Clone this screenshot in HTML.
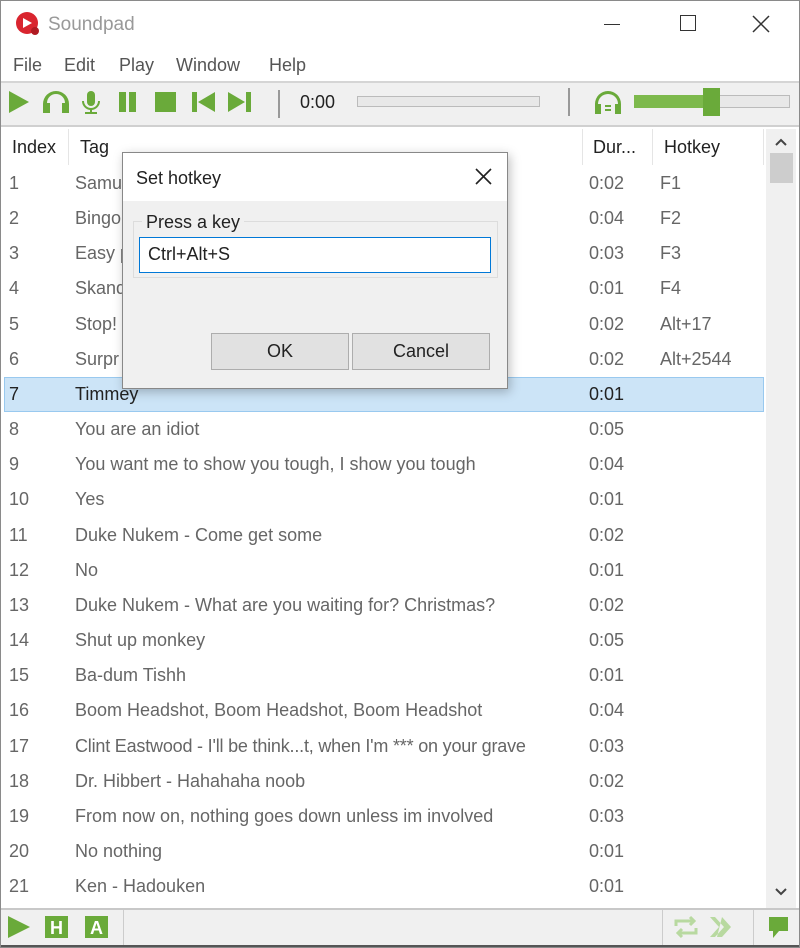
<!DOCTYPE html>
<html><head><style>
*{margin:0;padding:0;box-sizing:border-box}
body{width:800px;height:948px;background:#fff;font-family:"Liberation Sans",sans-serif;position:relative;overflow:hidden;color:#333}
.a{position:absolute}
.t{font-size:18px;white-space:nowrap}
.row{position:absolute;left:4px;width:760px;height:35px;font-size:18px;color:#666}
.row span{position:absolute;top:7px;white-space:nowrap}
.btn{position:absolute;background:#e1e1e1;border:1px solid #adadad;font-size:18px;text-align:center;line-height:35px;color:#222}
</style></head><body>
<div class="a" style="left:0;top:0;width:800px;height:948px;border:1px solid #8a8a8a"></div>
<!-- title -->
<svg class="a" style="left:14px;top:10px" width="28" height="28" viewBox="0 0 28 28"><circle cx="13" cy="13" r="11" fill="#d9252f"/><path d="M9 8l9 5-9 5z" fill="#fff"/><circle cx="21" cy="21" r="4" fill="#b01a22"/></svg>
<div class="a t" style="left:48px;top:14px;color:#999;font-size:19px">Soundpad</div>
<div class="a" style="left:604px;top:24px;width:16px;height:1px;background:#333"></div>
<div class="a" style="left:680px;top:15px;width:16px;height:16px;border:1px solid #333"></div>
<svg class="a" style="left:752px;top:15px" width="18" height="18"><path d="M1 1L17 17M17 1L1 17" stroke="#333" stroke-width="1.5"/></svg>
<!-- menu -->
<div class="a t" style="left:13px;top:55px;color:#555">File</div>
<div class="a t" style="left:64px;top:55px;color:#555">Edit</div>
<div class="a t" style="left:119px;top:55px;color:#555">Play</div>
<div class="a t" style="left:176px;top:55px;color:#555">Window</div>
<div class="a t" style="left:269px;top:55px;color:#555">Help</div>
<!-- toolbar -->
<div class="a" style="left:1px;top:81px;width:798px;height:46px;background:#f0f0f0;border-top:2px solid #d5d5d5;border-bottom:2px solid #d0d0d0"></div>
<svg class="a" style="left:6px;top:88px" width="260" height="30" viewBox="0 0 260 30" fill="#6aaa3a">
<path d="M3 3l20 11-20 11z"/>
<path d="M37 25v-9a13 13 0 0 1 26 0v9h-7v-10h3a9 9 0 0 0-18 0h3v10z"/>
<rect x="81" y="3" width="8" height="15" rx="4"/><path d="M77 13a8 8 0 0 0 16 0" stroke="#6aaa3a" stroke-width="2" fill="none"/><rect x="84" y="20" width="2" height="4"/><rect x="79" y="24" width="12" height="2"/>
<rect x="113" y="4" width="7" height="20"/><rect x="123" y="4" width="7" height="20"/>
<rect x="149" y="4" width="21" height="20"/>
<rect x="186" y="4" width="5" height="20"/><path d="M209 4v20l-17-10z"/>
<path d="M222 4v20l17-10z"/><rect x="240" y="4" width="5" height="20"/>
</svg>
<div class="a" style="left:278px;top:90px;width:2px;height:28px;background:#999"></div>
<div class="a t" style="left:300px;top:92px;color:#222">0:00</div>
<div class="a" style="left:357px;top:96px;width:183px;height:11px;border:1px solid #bbb;background:#e8e8e8"></div>
<div class="a" style="left:568px;top:88px;width:2px;height:28px;background:#999"></div>
<svg class="a" style="left:592px;top:88px" width="32" height="28" viewBox="0 0 32 28" fill="#6aaa3a"><path d="M3 26v-10a13 13 0 0 1 26 0v10h-6v-10h3a10 10 0 0 0-20 0h3v10z"/><rect x="13" y="17" width="6" height="2"/><rect x="13" y="21" width="6" height="2"/></svg>
<div class="a" style="left:634px;top:95px;width:156px;height:13px;border:1px solid #bbb;background:#e8e8e8"></div>
<div class="a" style="left:634px;top:95px;width:80px;height:13px;background:#7db94c"></div>
<div class="a" style="left:703px;top:88px;width:17px;height:28px;background:#6aaa3a"></div>
<!-- header -->
<div class="a t" style="left:12px;top:137px;color:#222">Index</div>
<div class="a" style="left:68px;top:129px;width:1px;height:36px;background:#e5e5e5"></div>
<div class="a t" style="left:80px;top:137px;color:#222">Tag</div>
<div class="a" style="left:582px;top:129px;width:1px;height:36px;background:#e5e5e5"></div>
<div class="a t" style="left:593px;top:137px;color:#222">Dur...</div>
<div class="a" style="left:652px;top:129px;width:1px;height:36px;background:#e5e5e5"></div>
<div class="a t" style="left:664px;top:137px;color:#222">Hotkey</div>
<div class="a" style="left:763px;top:129px;width:1px;height:36px;background:#e5e5e5"></div>
<!-- scrollbar -->
<div class="a" style="left:766px;top:129px;width:30px;height:780px;background:#f0f0f0"></div>
<svg class="a" style="left:775px;top:138px" width="12" height="8"><path d="M1 7l5-5 5 5" stroke="#444" stroke-width="2" fill="none"/></svg>
<div class="a" style="left:770px;top:153px;width:23px;height:30px;background:#cdcdcd"></div>
<svg class="a" style="left:775px;top:888px" width="12" height="8"><path d="M1 1l5 5 5-5" stroke="#444" stroke-width="2" fill="none"/></svg>
<!-- rows -->
<div class="a" style="left:4px;top:377px;width:760px;height:35px;background:#cce4f7;border:1px solid #99c9ef"></div>
<div class="row" style="top:166px"><span style="left:5px">1</span><span style="left:71px">Samuel</span><span style="left:585px">0:02</span><span style="left:656px">F1</span></div>
<div class="row" style="top:201px"><span style="left:5px">2</span><span style="left:71px">Bingo</span><span style="left:585px">0:04</span><span style="left:656px">F2</span></div>
<div class="row" style="top:236px"><span style="left:5px">3</span><span style="left:71px">Easy p</span><span style="left:585px">0:03</span><span style="left:656px">F3</span></div>
<div class="row" style="top:271px"><span style="left:5px">4</span><span style="left:71px">Skand</span><span style="left:585px">0:01</span><span style="left:656px">F4</span></div>
<div class="row" style="top:307px"><span style="left:5px">5</span><span style="left:71px">Stop!</span><span style="left:585px">0:02</span><span style="left:656px">Alt+17</span></div>
<div class="row" style="top:342px"><span style="left:5px">6</span><span style="left:71px">Surpr</span><span style="left:585px">0:02</span><span style="left:656px">Alt+2544</span></div>
<div class="row" style="top:377px;color:#222"><span style="left:5px">7</span><span style="left:71px">Timmey</span><span style="left:585px">0:01</span></div>
<div class="row" style="top:412px"><span style="left:5px">8</span><span style="left:71px">You are an idiot</span><span style="left:585px">0:05</span></div>
<div class="row" style="top:447px"><span style="left:5px">9</span><span style="left:71px">You want me to show you tough, I show you tough</span><span style="left:585px">0:04</span></div>
<div class="row" style="top:482px"><span style="left:5px">10</span><span style="left:71px">Yes</span><span style="left:585px">0:01</span></div>
<div class="row" style="top:518px"><span style="left:5px">11</span><span style="left:71px">Duke Nukem - Come get some</span><span style="left:585px">0:02</span></div>
<div class="row" style="top:553px"><span style="left:5px">12</span><span style="left:71px">No</span><span style="left:585px">0:01</span></div>
<div class="row" style="top:588px"><span style="left:5px">13</span><span style="left:71px">Duke Nukem - What are you waiting for? Christmas?</span><span style="left:585px">0:02</span></div>
<div class="row" style="top:623px"><span style="left:5px">14</span><span style="left:71px">Shut up monkey</span><span style="left:585px">0:05</span></div>
<div class="row" style="top:658px"><span style="left:5px">15</span><span style="left:71px">Ba-dum Tishh</span><span style="left:585px">0:01</span></div>
<div class="row" style="top:693px"><span style="left:5px">16</span><span style="left:71px">Boom Headshot, Boom Headshot, Boom Headshot</span><span style="left:585px">0:04</span></div>
<div class="row" style="top:729px"><span style="left:5px">17</span><span style="left:71px;letter-spacing:-0.2px">Clint Eastwood - I'll be think...t, when I'm *** on your grave</span><span style="left:585px">0:03</span></div>
<div class="row" style="top:764px"><span style="left:5px">18</span><span style="left:71px">Dr. Hibbert - Hahahaha noob</span><span style="left:585px">0:02</span></div>
<div class="row" style="top:799px"><span style="left:5px">19</span><span style="left:71px">From now on, nothing goes down unless im involved</span><span style="left:585px">0:03</span></div>
<div class="row" style="top:834px"><span style="left:5px">20</span><span style="left:71px">No nothing</span><span style="left:585px">0:01</span></div>
<div class="row" style="top:869px"><span style="left:5px">21</span><span style="left:71px">Ken - Hadouken</span><span style="left:585px">0:01</span></div>
<!-- bottom bar -->
<div class="a" style="left:1px;top:908px;width:798px;height:39px;background:#f0f0f0;border-top:2px solid #c8c8c8;border-bottom:2px solid #555"></div>
<div class="a" style="left:123px;top:910px;width:1px;height:35px;background:#ccc"></div>
<div class="a" style="left:662px;top:910px;width:1px;height:35px;background:#ccc"></div>
<div class="a" style="left:753px;top:910px;width:1px;height:35px;background:#ccc"></div>
<svg class="a" style="left:6px;top:914px" width="110" height="26" viewBox="0 0 110 26"><path d="M2 2l22 11-22 11z" fill="#6aaa3a"/><rect x="39" y="2" width="23" height="22" fill="#6aaa3a"/><text x="50.5" y="20" font-size="18" font-weight="bold" fill="#fff" text-anchor="middle" font-family="Liberation Sans">H</text><rect x="79" y="2" width="23" height="22" fill="#6aaa3a"/><text x="90.5" y="20" font-size="18" font-weight="bold" fill="#fff" text-anchor="middle" font-family="Liberation Sans">A</text></svg>
<svg class="a" style="left:672px;top:914px" width="120" height="26" viewBox="0 0 120 26"><path d="M4 12v-5h18M18 3l4 4-4 4M24 14v5H6M10 23l-4-4 4-4" stroke="#b8d9a0" stroke-width="3" fill="none"/><path d="M38 3l9 10-9 10h5l9-10-9-10zM50 3l9 10-9 10h-5" fill="#b8d9a0"/><path d="M97 3h19v14h-9l-6 7v-7h-4z" fill="#6aaa3a"/></svg>
<!-- dialog -->
<div class="a" style="left:122px;top:152px;width:386px;height:237px;background:#f0f0f0;border:1px solid #888;box-shadow:2px 3px 10px rgba(0,0,0,.25)"></div>
<div class="a" style="left:123px;top:153px;width:384px;height:48px;background:#fff"></div>
<div class="a t" style="left:136px;top:168px;color:#222">Set hotkey</div>
<svg class="a" style="left:475px;top:168px" width="17" height="17"><path d="M1 1L16 16M16 1L1 16" stroke="#222" stroke-width="1.6"/></svg>
<div class="a" style="left:133px;top:221px;width:365px;height:57px;border:1px solid #dcdcdc"></div>
<div class="a t" style="left:142px;top:212px;color:#222;background:#f0f0f0;padding:0 4px">Press a key</div>
<div class="a" style="left:139px;top:237px;width:352px;height:36px;background:#fff;border:1px solid #0078d7"></div>
<div class="a t" style="left:148px;top:244px;color:#222">Ctrl+Alt+S</div>
<div class="btn" style="left:211px;top:333px;width:138px;height:37px">OK</div>
<div class="btn" style="left:352px;top:333px;width:138px;height:37px">Cancel</div>
</body></html>
